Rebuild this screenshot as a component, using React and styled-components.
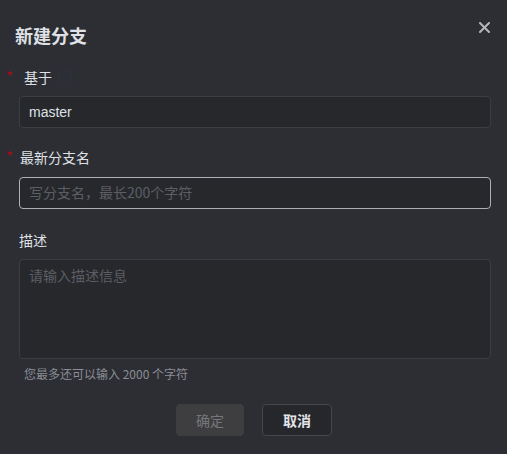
import React, { useState } from 'react';
import styled, { createGlobalStyle } from 'styled-components';

const GlobalStyle = createGlobalStyle`
  html, body {
    margin: 0;
    padding: 0;
    background: #2d2e33;
  }
  body {
    font-family: "Noto Sans CJK SC", "Liberation Sans", sans-serif;
  }
`;

const Dialog = styled.div`
  position: relative;
  box-sizing: border-box;
  width: 507px;
  height: 454px;
  background: #2d2e33;
  padding: 22px 16px 0 19px;
  display: flex;
  flex-direction: column;
`;

const Title = styled.h2`
  margin: 0 0 0 -4px;
  font-size: 18px;
  line-height: 26px;
  font-weight: 700;
  color: #dfe1e6;
`;

const CloseButton = styled.button`
  position: absolute;
  top: 21px;
  right: 17px;
  width: 12px;
  height: 12px;
  padding: 0;
  border: none;
  background: none;
  display: flex;
  align-items: center;
  justify-content: center;
  cursor: pointer;
`;

const Field = styled.div`
  display: flex;
  flex-direction: column;
  margin-top: ${(p) => p.$top}px;
`;

const LabelRow = styled.div`
  display: flex;
  align-items: center;
  height: 20px;
  margin-left: ${(p) => (p.$required ? -12 : 0)}px;
  margin-bottom: ${(p) => p.$below || 9}px;
`;

const Star = styled.span`
  width: 5px;
  margin-right: ${(p) => p.$gap}px;
  color: #c7000b;
  font-family: "Liberation Sans", sans-serif;
  font-size: 13px;
  line-height: 12px;
  align-self: flex-start;
  margin-top: 3px;
`;

const Label = styled.label`
  font-size: 14px;
  line-height: 20px;
  color: #dfe1e6;
`;

const HelpIcon = styled.span`
  display: flex;
  margin-left: 5px;
`;

const TextInput = styled.input`
  box-sizing: border-box;
  width: 472px;
  height: 32px;
  padding: 0 9px;
  border-radius: 4px;
  border: 1px solid ${(p) => (p.$active ? '#aeb0b6' : '#3c3d42')};
  background: #27282c;
  color: #dfe1e6;
  font-family: "Liberation Sans", "Noto Sans CJK SC", sans-serif;
  font-size: 14px;
  outline: none;

  &::placeholder {
    color: #5c5e65;
    font-family: "Noto Sans CJK SC", "Liberation Sans", sans-serif;
  }
`;

const TextArea = styled.textarea`
  box-sizing: border-box;
  width: 472px;
  height: 100px;
  padding: 5px 9px;
  border-radius: 4px;
  border: 1px solid #3c3d42;
  background: #27282c;
  color: #dfe1e6;
  font-family: "Noto Sans CJK SC", "Liberation Sans", sans-serif;
  font-size: 14px;
  line-height: 20px;
  resize: none;
  outline: none;

  &::placeholder {
    color: #5c5e65;
  }
`;

const Hint = styled.div`
  margin: 6px 0 0 5px;
  font-size: 12px;
  line-height: 18px;
  color: #8a8d95;
`;

const Footer = styled.div`
  display: flex;
  justify-content: center;
  gap: 18px;
  margin-top: 21px;
  padding-right: 2px;
`;

const Button = styled.button`
  box-sizing: border-box;
  height: 32px;
  min-width: ${(p) => p.$width}px;
  padding: 0 16px;
  border-radius: 4px;
  font-family: "Noto Sans CJK SC", "Liberation Sans", sans-serif;
  font-size: 14px;
  border: 1px solid ${(p) => (p.$primary ? '#3e3e40' : '#45464b')};
  background: ${(p) => (p.$primary ? '#3e3e40' : '#26272b')};
  color: ${(p) => (p.$primary ? '#76777b' : '#e3e4e8')};
  font-weight: ${(p) => (p.$primary ? 400 : 700)};
  cursor: ${(p) => (p.$primary ? 'not-allowed' : 'pointer')};
`;

function App() {
  const [branch, setBranch] = useState('');
  const [desc, setDesc] = useState('');

  return (
    <Dialog>
      <GlobalStyle />
      <Title>新建分支</Title>
      <CloseButton aria-label="close">
        <svg width="11" height="11" viewBox="0 0 11 11">
          <path d="M1 1 L10 10 M10 1 L1 10" stroke="#b4b6bc" strokeWidth="2" strokeLinecap="round" />
        </svg>
      </CloseButton>

      <Field $top={19}>
        <LabelRow $required>
          <Star $gap={12}>*</Star>
          <Label>基于</Label>
          <HelpIcon>
            <svg width="16" height="16" viewBox="0 0 16 16">
              <circle cx="8" cy="8" r="6.5" fill="none" stroke="#2a3345" strokeWidth="1" />
              <path d="M6.2 6.3a1.8 1.8 0 1 1 2.4 1.7c-.4.2-.6.5-.6.9v.6M8 11.2v.4" fill="none" stroke="#2a3345" strokeWidth="1" />
            </svg>
          </HelpIcon>
        </LabelRow>
        <TextInput value="master" readOnly />
      </Field>

      <Field $top={19}>
        <LabelRow $required $below={10}>
          <Star $gap={8}>*</Star>
          <Label>最新分支名</Label>
        </LabelRow>
        <TextInput
          $active
          value={branch}
          onChange={(e) => setBranch(e.target.value)}
          placeholder="写分支名，最长200个字符"
        />
      </Field>

      <Field $top={21}>
        <LabelRow>
          <Label>描述</Label>
        </LabelRow>
        <TextArea
          value={desc}
          onChange={(e) => setDesc(e.target.value)}
          placeholder="请输入描述信息"
        />
        <Hint>您最多还可以输入 {2000 - desc.length} 个字符</Hint>
      </Field>

      <Footer>
        <Button $primary $width={68} disabled>确定</Button>
        <Button $width={70}>取消</Button>
      </Footer>
    </Dialog>
  );
}

export default App;
